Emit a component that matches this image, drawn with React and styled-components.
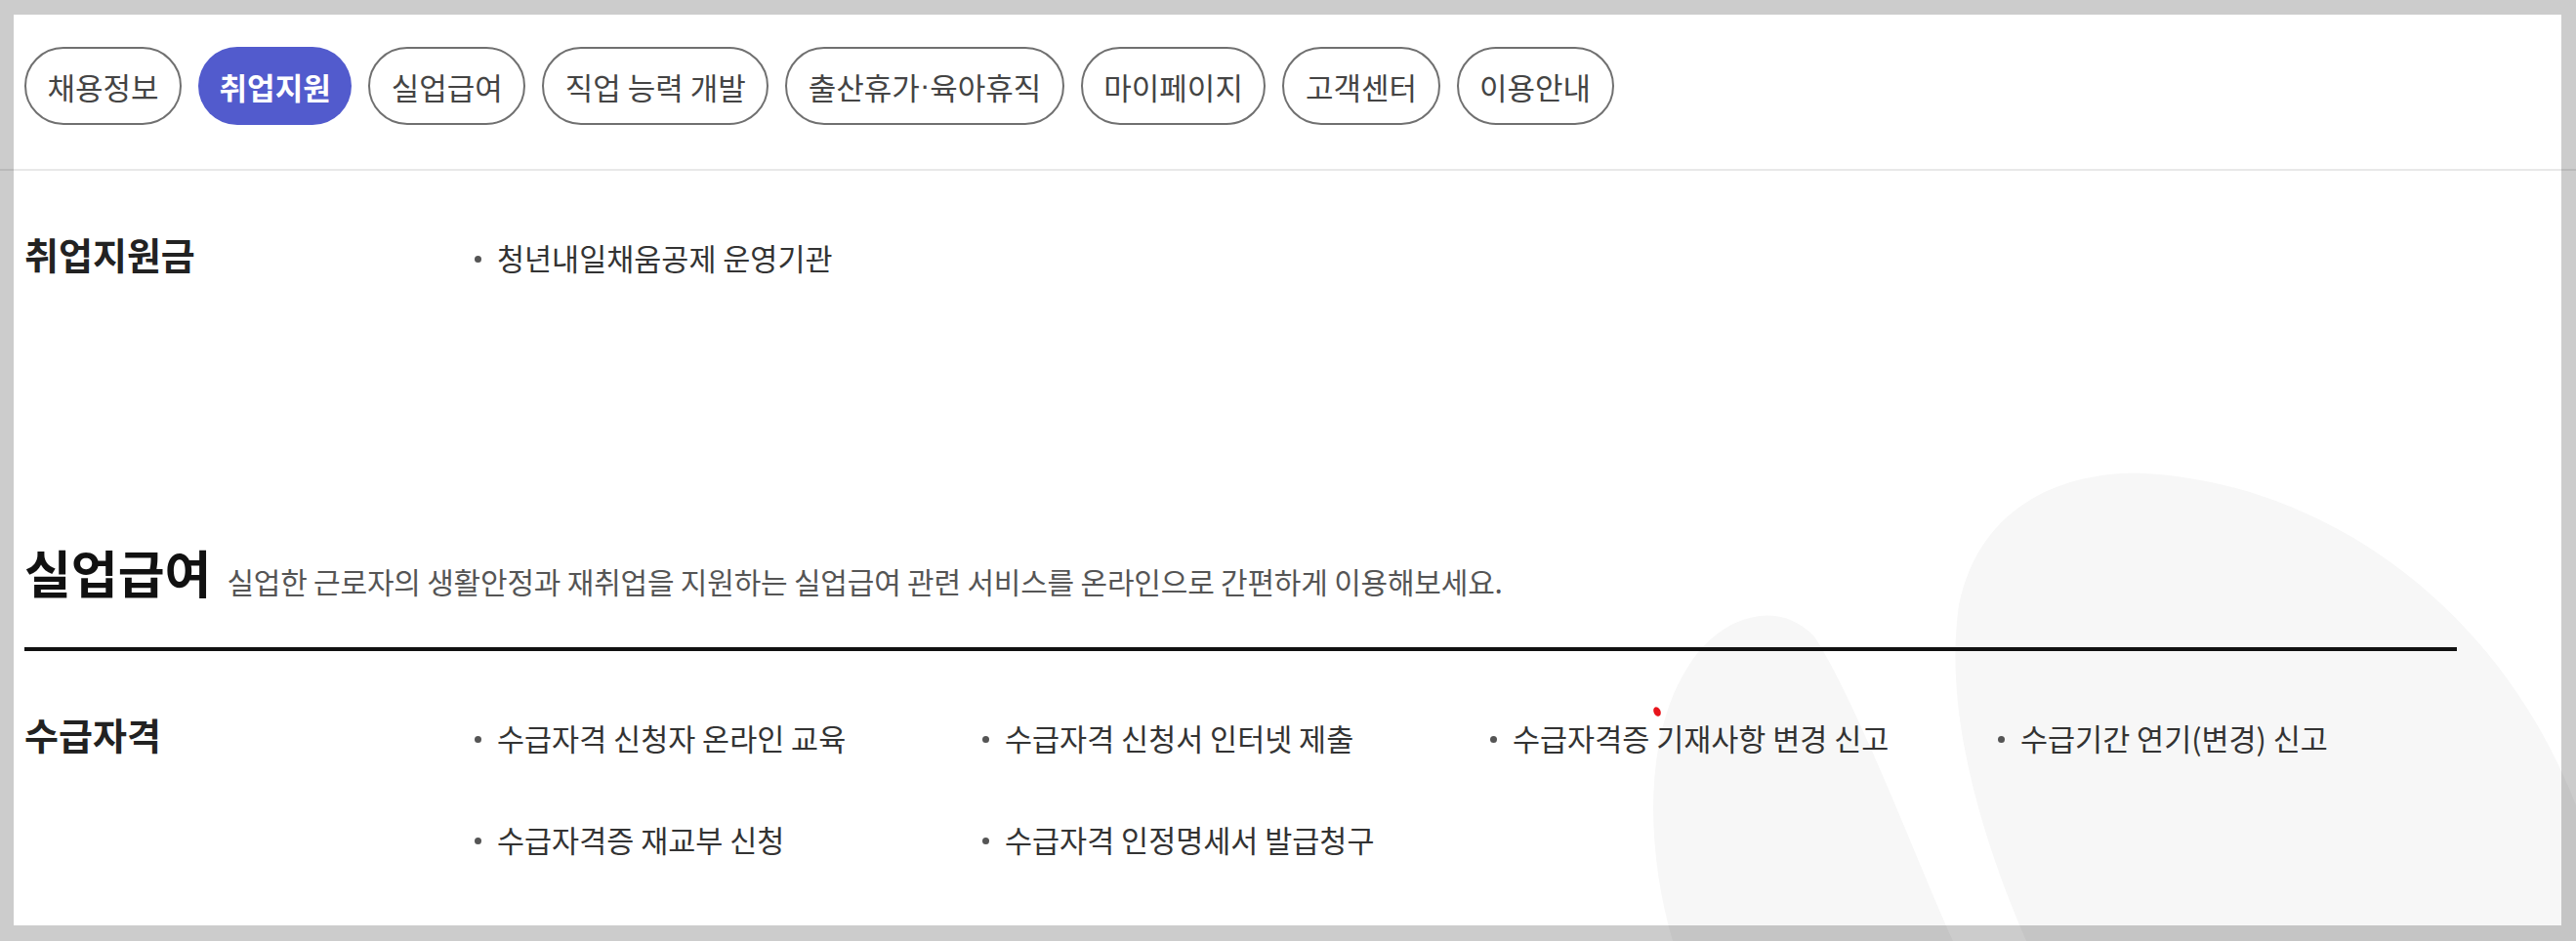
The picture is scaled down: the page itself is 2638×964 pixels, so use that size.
import React from "react";
import styled, { createGlobalStyle } from "styled-components";

const GlobalStyle = createGlobalStyle`
  html, body {
    margin: 0;
    padding: 0;
    background: #ffffff;
  }
  body {
    font-family: "Noto Sans CJK KR", "Noto Sans", sans-serif;
    color: #333333;
  }
`;

const Page = styled.div`
  position: relative;
  width: 2638px;
  height: 964px;
  overflow: hidden;
  background: #ffffff;
`;

const Backdrop = styled.svg`
  position: absolute;
  left: 0;
  top: 0;
  width: 2638px;
  height: 964px;
  pointer-events: none;
`;

const Frame = styled.div`
  position: fixed;
  inset: 0;
  box-sizing: border-box;
  border-style: solid;
  border-width: 15px 15px 16px 14px;
  border-color: rgba(0, 0, 0, 0.2);
  pointer-events: none;
  z-index: 10;
`;

const Nav = styled.nav`
  position: relative;
  display: flex;
  gap: 17px;
  padding: 48px 25px 45px;
  border-bottom: 2px solid #e8e8e8;
`;

const Pill = styled.a`
  box-sizing: border-box;
  display: flex;
  align-items: center;
  height: 80px;
  padding: 0 21.5px;
  border-radius: 40px;
  border: ${(props) => (props.$active ? "none" : "2px solid #707070")};
  background: ${(props) => (props.$active ? "#525bcd" : "#ffffff")};
  color: ${(props) => (props.$active ? "#ffffff" : "#444444")};
  font-size: 31px;
  font-weight: ${(props) => (props.$active ? 700 : 400)};
  white-space: nowrap;
  cursor: pointer;
`;

// narrow latin middle dot, the CJK one is full width
const Dot = styled.span`
  font-family: "Liberation Sans", sans-serif;
`;

const Content = styled.main`
  position: relative;
  padding: 0 25px;
`;

const Group = styled.section`
  display: flex;
  align-items: flex-start;
  padding-top: 65px;
  margin-bottom: ${(props) => props.$after || 0}px;
`;

const Label = styled.h3`
  width: 459px;
  flex: none;
  margin: 0;
  font-size: 38px;
  line-height: 40px;
  font-weight: 700;
  color: #222222;
`;

const Items = styled.ul`
  display: grid;
  grid-template-columns: repeat(4, 520px);
  row-gap: 56px;
  margin: 0;
  padding: 0;
  list-style: none;
`;

const Item = styled.li`
  position: relative;
  padding-left: 25px;
  font-size: 30.5px;
  line-height: 48px;
  color: #333333;
  white-space: nowrap;

  &::before {
    content: "";
    position: absolute;
    left: 2px;
    top: 50%;
    width: 7px;
    height: 7px;
    margin-top: -2px;
    border-radius: 50%;
    background: #555555;
  }
`;

const Header = styled.header`
  display: flex;
  align-items: baseline;
  gap: 16px;
  width: 2491px;
  padding-bottom: 46px;
  border-bottom: 4px solid #111111;
`;

const Title = styled.h2`
  margin: 0;
  font-size: 52px;
  line-height: 60px;
  font-weight: 700;
  color: #111111;
`;

const Lead = styled.p`
  margin: 0;
  font-size: 30px;
  color: #555555;
  letter-spacing: -0.2px;
`;

const menus = [
  "채용정보",
  "취업지원",
  "실업급여",
  "직업 능력 개발",
  ["출산휴가", "육아휴직"],
  "마이페이지",
  "고객센터",
  "이용안내",
];

const eligibility = [
  "수급자격 신청자 온라인 교육",
  "수급자격 신청서 인터넷 제출",
  "수급자격증 기재사항 변경 신고",
  "수급기간 연기(변경) 신고",
  "수급자격증 재교부 신청",
  "수급자격 인정명세서 발급청구",
];

export default function App() {
  return (
    <Page>
      <GlobalStyle />
      <Backdrop viewBox="0 0 2638 964">
        <path
          d="M1713 964 C1688 880 1680 760 1728 684 C1758 634 1818 610 1858 652 C1902 720 1962 880 2000 964 Z"
          fill="#f7f7f7"
        />
        <path
          d="M2075 964 C2030 860 1990 730 2006 620 C2026 520 2110 482 2196 485 C2380 495 2560 620 2640 830 L2700 964 Z"
          fill="#f7f7f7"
        />
        <ellipse
          cx="1697"
          cy="729"
          rx="3.5"
          ry="5"
          fill="#e8141b"
          transform="rotate(-25 1697 729)"
        />
      </Backdrop>

      <Nav>
        {menus.map((m) =>
          Array.isArray(m) ? (
            <Pill key={m.join()}>
              {m[0]}
              <Dot>·</Dot>
              {m[1]}
            </Pill>
          ) : (
            <Pill key={m} $active={m === "취업지원"}>
              {m}
            </Pill>
          )
        )}
      </Nav>

      <Content>
        <Group $after={268}>
          <Label>취업지원금</Label>
          <Items>
            <Item>청년내일채움공제 운영기관</Item>
          </Items>
        </Group>

        <Header>
          <Title>실업급여</Title>
          <Lead>
            실업한 근로자의 생활안정과 재취업을 지원하는 실업급여 관련 서비스를
            온라인으로 간편하게 이용해보세요.
          </Lead>
        </Header>

        <Group>
          <Label>수급자격</Label>
          <Items>
            {eligibility.map((e) => (
              <Item key={e}>{e}</Item>
            ))}
          </Items>
        </Group>
      </Content>
      <Frame />
    </Page>
  );
}
